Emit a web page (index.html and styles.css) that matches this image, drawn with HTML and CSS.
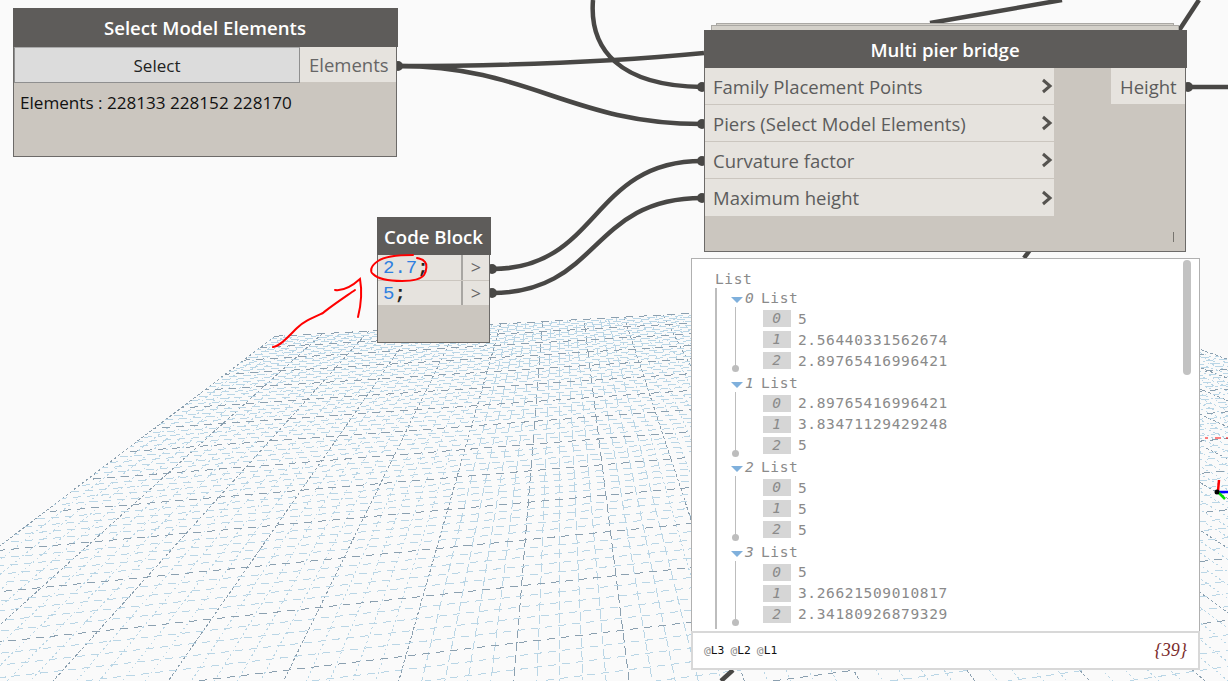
FILE: index.html
```html
<!DOCTYPE html>
<html lang="en">
<head>
  <meta charset="UTF-8" />
  <title>Multi pier bridge</title>
  <link rel="stylesheet" href="styles.css">
</head>
<body>
  <div class="canvas">
    <svg class="layer" id="grid" width="1228" height="681"></svg>

    <svg class="layer" width="1228" height="681">
      <g class="wire">
        <path d="M398,66 C500,66 600,63 704,53" />
        <path d="M398,66 C530,66 570,124 702,124" />
        <path d="M593,0 C589,50 620,86 702,87" />
        <path d="M492,269 C600,269 590,161 702,161" />
        <path d="M492,293 C600,293 590,198 702,198" />
        <path d="M930,23 L1062,0" />
        <path d="M1178,32 L1199,0" />
        <path d="M1024,258 L1030,250" />
        <path d="M721,681 L733,670" />
        <path d="M1188,87 L1228,87" />
      </g>
      <g class="pin">
        <circle cx="398" cy="66" r="5" />
        <circle cx="492" cy="269" r="5" />
        <circle cx="492" cy="293" r="5" />
        <circle cx="702" cy="87" r="5" />
        <circle cx="702" cy="124" r="5" />
        <circle cx="702" cy="161" r="5" />
        <circle cx="702" cy="198" r="5" />
        <circle cx="1188" cy="87" r="5" />
      </g>
      <g class="axis">
        <path class="axis-red thin" d="M1205,438 h3 M1215,438 h6 M1226,438 h2" />
        <path class="axis-red" d="M1218,491 L1219,480" />
        <path class="axis-blue" d="M1218,492 H1228" />
        <path class="axis-green" d="M1218,492 L1225,499" />
        <circle cx="1217" cy="492" r="2.5" />
      </g>
    </svg>

    <div class="node select-node">
      <div class="node-title">Select Model Elements</div>
      <div class="select-row">
        <div class="select-btn">Select</div>
        <div class="port-out">Elements</div>
      </div>
      <div class="select-info">Elements : 228133 228152 228170</div>
    </div>

    <div class="node code-node">
      <div class="node-title">Code Block</div>
      <div class="code-row">
        <div class="code-line"><span class="num">2.7</span>;</div>
        <div class="code-port">&gt;</div>
      </div>
      <div class="code-row">
        <div class="code-line"><span class="num">5</span>;</div>
        <div class="code-port">&gt;</div>
      </div>
    </div>

    <div class="stack stack-back"></div>
    <div class="stack stack-mid"></div>
    <div class="node pier-node">
      <div class="node-title">Multi pier bridge</div>
      <div class="pier-body">
        <div class="pier-inputs">
          <div class="pier-input"><span>Family Placement Points</span><svg class="chev" width="12" height="16" viewBox="0 0 12 16"><path d="M2,2 L9,8 L2,14" /></svg></div>
          <div class="pier-input"><span>Piers (Select Model Elements)</span><svg class="chev" width="12" height="16" viewBox="0 0 12 16"><path d="M2,2 L9,8 L2,14" /></svg></div>
          <div class="pier-input"><span>Curvature factor</span><svg class="chev" width="12" height="16" viewBox="0 0 12 16"><path d="M2,2 L9,8 L2,14" /></svg></div>
          <div class="pier-input"><span>Maximum height</span><svg class="chev" width="12" height="16" viewBox="0 0 12 16"><path d="M2,2 L9,8 L2,14" /></svg></div>
        </div>
        <div class="pier-output">Height</div>
      </div>
      <div class="lacing"></div>
    </div>

    <div class="preview">
      <div class="preview-body">
        <div class="list-root">List</div>
        <div class="list-tree">
          <div class="group">
            <div class="group-head"><span class="tri"></span><i>0</i><span class="lbl">List</span></div>
            <div class="item"><i>0</i><span>5</span></div>
            <div class="item"><i>1</i><span>2.56440331562674</span></div>
            <div class="item"><i>2</i><span>2.89765416996421</span></div>
          </div>
          <div class="group">
            <div class="group-head"><span class="tri"></span><i>1</i><span class="lbl">List</span></div>
            <div class="item"><i>0</i><span>2.89765416996421</span></div>
            <div class="item"><i>1</i><span>3.83471129429248</span></div>
            <div class="item"><i>2</i><span>5</span></div>
          </div>
          <div class="group">
            <div class="group-head"><span class="tri"></span><i>2</i><span class="lbl">List</span></div>
            <div class="item"><i>0</i><span>5</span></div>
            <div class="item"><i>1</i><span>5</span></div>
            <div class="item"><i>2</i><span>5</span></div>
          </div>
          <div class="group">
            <div class="group-head"><span class="tri"></span><i>3</i><span class="lbl">List</span></div>
            <div class="item"><i>0</i><span>5</span></div>
            <div class="item"><i>1</i><span>3.26621509010817</span></div>
            <div class="item"><i>2</i><span>2.34180926879329</span></div>
          </div>
        </div>
        <div class="scroll-thumb"></div>
      </div>
      <div class="preview-foot">
        <div class="levels"><span><b>@</b>L3</span><span><b>@</b>L2</span><span><b>@</b>L1</span></div>
        <div class="count">{39}</div>
      </div>
    </div>

    <svg class="layer" width="1228" height="681">
      <g class="scribble">
        <path d="M413,255 C400,255 385,256 378,261 C370,266 370,272 373,274 C379,280 392,281 402,281 C412,281 421,279 424,275 C427,270 427,264 425,262 C423,259 420,259 417,258" />
        <path d="M273,347 C280,346 287,338 297,328 C303,322 310,319 323,313 C330,307 345,297 355,290" />
        <path d="M335,290 C342,291 350,288 360,279 C362,290 361,305 358,317" />
      </g>
    </svg>
  </div>
  <script src="grid.js"></script>
</body>
</html>
```

FILE: styles.css
```css
* {
  box-sizing: border-box;
}
body {
  margin: 0;
  background: #fafafa;
  font-family: "Open Sans", sans-serif;
}
.canvas {
  position: relative;
  width: 1228px;
  height: 681px;
  overflow: hidden;
  background: #fafafa;
}
.layer {
  position: absolute;
  left: 0;
  top: 0;
}

/* background grid */
#grid line {
  shape-rendering: crispEdges;
  stroke-width: 1;
}
.grid-minor {
  stroke: #bad6e6;
}
.grid-major {
  stroke: #8ba0b0;
}

/* wires */
.wire path {
  fill: none;
  stroke: #484745;
  stroke-width: 4.5;
}
.pin circle {
  fill: #484745;
}
.axis path {
  fill: none;
  stroke-width: 2.5;
}
.axis-red {
  stroke: #f00;
}
.axis-red.thin {
  stroke-width: 1;
}
.axis-blue {
  stroke: #00f;
}
.axis-green {
  stroke: #0d0;
}
.axis circle {
  fill: #000;
}
.scribble path {
  fill: none;
  stroke: #f00;
  stroke-width: 2;
  stroke-linecap: round;
}

/* nodes */
.node {
  position: absolute;
  background: #cbc6bf;
  border: 1.5px solid #6c6a68;
  border-top: 0;
}
.node-title {
  background: #5e5c5a;
  color: #fff;
  font-weight: 600;
  font-size: 18.6px;
  text-align: center;
  margin: 0 -1.5px;
}
.select-node {
  left: 13px;
  top: 8px;
  width: 384px;
  height: 149px;
}
.select-node .node-title {
  height: 39px;
  line-height: 39px;
}
.select-row {
  display: flex;
  height: 36px;
}
.select-btn {
  width: 286px;
  height: 36px;
  background: #dcdcdc;
  border: 1px solid #8f8f8f;
  border-top-color: #aaa;
  font-size: 17px;
  line-height: 35px;
  text-align: center;
  color: #222;
}
.port-out {
  flex: 1;
  height: 35px;
  background: #e6e3de;
  color: #666;
  font-size: 18.5px;
  line-height: 36px;
  padding-left: 9px;
}
.select-info {
  padding: 8px 6px;
  font-size: 17.1px;
  color: #111;
}

.code-node {
  left: 377px;
  top: 217px;
  width: 113px;
  height: 126px;
}
.code-node .node-title {
  height: 38px;
  line-height: 40px;
}
.code-row {
  display: flex;
  height: 25px;
}
.code-row + .code-row {
  border-top: 1px solid #cbc6bf;
}
.code-line {
  width: 85px;
  background: #e6e3de;
  border-right: 2px solid #a8a6a2;
  font-family: "Liberation Mono", monospace;
  font-size: 19px;
  line-height: 27px;
  padding-left: 5px;
  color: #222;
  font-weight: 700;
}
.code-line .num {
  color: #2f80e0;
  font-weight: 400;
}
.code-port {
  flex: 1;
  background: #e6e3de;
  color: #666;
  font-size: 18px;
  line-height: 24px;
  text-align: center;
}

.stack {
  position: absolute;
  background: #d3d0c9;
  border: 1.5px solid #aaa8a4;
}
.stack-back {
  left: 716px;
  top: 23px;
  width: 458px;
  height: 12px;
}
.stack-mid {
  left: 711px;
  top: 25px;
  width: 468px;
  height: 12px;
}
.pier-node {
  left: 704px;
  top: 30px;
  width: 482px;
  height: 222px;
}
.pier-node .node-title {
  height: 38px;
  line-height: 40px;
}
.pier-body {
  display: flex;
  justify-content: space-between;
  align-items: flex-start;
}
.pier-inputs {
  width: 349px;
}
.pier-input {
  display: flex;
  justify-content: space-between;
  align-items: center;
  height: 37px;
  padding: 0 0 0 8px;
  background: #e6e3de;
  border-bottom: 1px solid #cbc6bf;
  color: #5c5c5c;
  font-size: 18.5px;
}
.pier-input:last-child {
  border-bottom: 0;
}
.chev {
  margin-right: 1px;
}
.chev path {
  fill: none;
  stroke: #55534f;
  stroke-width: 3;
}
.pier-output {
  width: 74px;
  height: 36px;
  background: #e6e3de;
  color: #5c5c5c;
  font-size: 18.5px;
  line-height: 38px;
  padding-left: 9px;
}
.lacing {
  position: absolute;
  right: 11px;
  bottom: 9px;
  width: 1px;
  height: 10px;
  background: #77746f;
}

/* data preview */
.preview {
  position: absolute;
  left: 691px;
  top: 258px;
  width: 509px;
  height: 412px;
  background: #fff;
  display: flex;
  flex-direction: column;
}
.preview-body {
  position: relative;
  height: 373px;
  overflow: hidden;
  border: 1.5px solid #b0b0b0;
  border-bottom: 0;
  padding: 11px 0 0 23px;
  font-family: "DejaVu Sans Mono", monospace;
  font-size: 14.5px;
  letter-spacing: 0.64px;
  color: #8a8a8a;
}
.list-root {
  height: 18px;
  line-height: 18px;
}
.list-tree {
  border-left: 2px solid #bdbdbd;
  padding: 0 0 3px 14px;
}
.group {
  position: relative;
  height: 84.5px;
}
.group::before {
  content: "";
  position: absolute;
  left: 4px;
  top: 19px;
  height: 60px;
  border-left: 1px solid #bdbdbd;
}
.group::after {
  content: "";
  position: absolute;
  left: 1px;
  top: 77px;
  width: 7px;
  height: 7px;
  border-radius: 50%;
  background: #bdbdbd;
}
.group-head {
  display: flex;
  align-items: center;
  height: 20px;
}
.tri {
  width: 0;
  height: 0;
  margin-right: 2px;
  border-left: 6px solid transparent;
  border-right: 6px solid transparent;
  border-top: 6px solid #7fb0dc;
  position: relative;
  top: 2px;
}
.group-head i {
  width: 16px;
}
.item {
  display: flex;
  align-items: center;
  height: 21.2px;
  margin-left: 32px;
}
.item i {
  width: 28px;
  height: 17px;
  line-height: 17px;
  margin-right: 7px;
  background: #d6d6d6;
  text-align: center;
}
.scroll-thumb {
  position: absolute;
  left: 491px;
  top: 1px;
  width: 8px;
  height: 115px;
  border-radius: 5px;
  background: #c2c2c2;
}
.preview-foot {
  flex: 1;
  display: flex;
  justify-content: space-between;
  align-items: center;
  padding: 0 11px 0 11px;
  border: 2px solid #d8d8d8;
}
.levels {
  display: flex;
  gap: 6px;
  font-family: "DejaVu Sans Mono", monospace;
  font-size: 11.3px;
  color: #111;
}
.levels b {
  color: #8a8a8a;
  font-weight: 400;
}
.count {
  font-family: "Liberation Serif", serif;
  font-style: italic;
  font-size: 18px;
  color: #7a2a2a;
}
```

FILE: grid.js
```js
// floor grid drawn in two-point perspective
const svg = document.getElementById('grid');

const vp1 = { x: 559, y: 120 };
const vp2 = { x: 5500, y: 50 };

function rowStart(v) {
  return 128 + 1 / (0.001946 + 0.000211 * v);
}

// where fan line u crosses row v
function point(u, v) {
  const a = (-176 + 23 * u - vp1.x) / 560;
  const y0 = rowStart(v);
  const s = (vp2.y - y0) / vp2.x;
  const y = (y0 + s * vp1.x - s * a * vp1.y) / (1 - s * a);
  return { x: vp1.x + a * (y - vp1.y), y: y };
}

function addLine(p, q, major, dash, offset) {
  const line = document.createElementNS('http://www.w3.org/2000/svg', 'line');
  line.setAttribute('x1', p.x);
  line.setAttribute('y1', p.y);
  line.setAttribute('x2', q.x);
  line.setAttribute('y2', q.y);
  line.setAttribute('class', major ? 'grid-major' : 'grid-minor');
  line.setAttribute('stroke-dasharray', dash);
  line.setAttribute('stroke-dashoffset', offset);
  svg.appendChild(line);
}

for (let u = 0; u <= 100; u++) {
  const a = Math.abs(-176 + 23 * u - vp1.x) / 560;
  const major = u % 5 === 0;
  let dash = major ? '3 2' : '2 3';
  if (a < 0.25) dash = '9 4';
  addLine(point(u, 12), point(u, -5), major, dash, u);
}

for (let i = 0; i <= 85; i++) {
  const v = 12 - i / 5;
  addLine(point(0, v), point(100, v), i % 5 === 0, '8 6', i * 3);
}
```
